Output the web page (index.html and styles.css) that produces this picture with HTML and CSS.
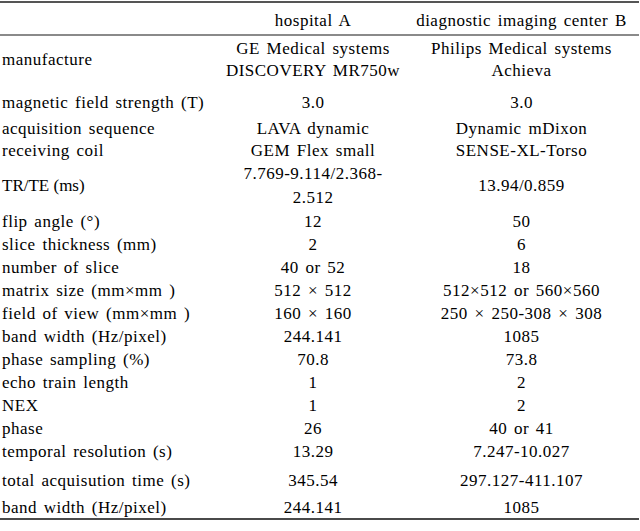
FILE: index.html
```html
<!DOCTYPE html>
<html>
<head>
<meta charset="utf-8">
<link rel="stylesheet" href="styles.css">
</head>
<body>
<table class="spec">
  <colgroup>
    <col class="c-label">
    <col class="c-a">
    <col class="c-b">
  </colgroup>
  <thead>
    <tr class="r-head">
      <th class="label"></th>
      <th>hospital A</th>
      <th>diagnostic imaging center B</th>
    </tr>
  </thead>
  <tbody>
    <tr class="r-manu">
      <td class="label">manufacture</td>
      <td>GE Medical systems<br>DISCOVERY MR750w</td>
      <td>Philips Medical systems<br>Achieva</td>
    </tr>
    <tr class="r-field">
      <td class="label">magnetic field strength (T)</td>
      <td>3.0</td>
      <td>3.0</td>
    </tr>
    <tr class="r-acq">
      <td class="label">acquisition sequence<br>receiving coil</td>
      <td>LAVA dynamic<br>GEM Flex small</td>
      <td>Dynamic mDixon<br>SENSE-XL-Torso</td>
    </tr>
    <tr class="r-trte">
      <td class="label tight">TR/TE (ms)</td>
      <td>7.769-9.114/2.368-<br>2.512</td>
      <td>13.94/0.859</td>
    </tr>
    <tr class="r-std">
      <td class="label">flip angle (°)</td>
      <td>12</td>
      <td>50</td>
    </tr>
    <tr class="r-std">
      <td class="label">slice thickness (mm)</td>
      <td>2</td>
      <td>6</td>
    </tr>
    <tr class="r-std">
      <td class="label">number of slice</td>
      <td>40 or 52</td>
      <td>18</td>
    </tr>
    <tr class="r-std">
      <td class="label">matrix size (mm×mm )</td>
      <td>512 × 512</td>
      <td>512×512 or 560×560</td>
    </tr>
    <tr class="r-std">
      <td class="label">field of view (mm×mm )</td>
      <td>160 × 160</td>
      <td>250 × 250-308 × 308</td>
    </tr>
    <tr class="r-std">
      <td class="label">band width (Hz/pixel)</td>
      <td>244.141</td>
      <td>1085</td>
    </tr>
    <tr class="r-std">
      <td class="label">phase sampling (%)</td>
      <td>70.8</td>
      <td>73.8</td>
    </tr>
    <tr class="r-std">
      <td class="label">echo train length</td>
      <td>1</td>
      <td>2</td>
    </tr>
    <tr class="r-std">
      <td class="label">NEX</td>
      <td>1</td>
      <td>2</td>
    </tr>
    <tr class="r-std">
      <td class="label">phase</td>
      <td>26</td>
      <td>40 or 41</td>
    </tr>
    <tr class="r-std">
      <td class="label">temporal resolution (s)</td>
      <td>13.29</td>
      <td>7.247-10.027</td>
    </tr>
    <tr class="r-total">
      <td class="label">total acquisution time (s)</td>
      <td>345.54</td>
      <td>297.127-411.107</td>
    </tr>
    <tr class="r-last">
      <td class="label">band width (Hz/pixel)</td>
      <td>244.141</td>
      <td>1085</td>
    </tr>
  </tbody>
</table>
</body>
</html>
```

FILE: styles.css
```css
html, body {
  margin: 0;
  padding: 0;
  background: #ffffff;
}

.spec {
  margin-top: 1px;
  width: 639px;
  border-collapse: collapse;
  table-layout: fixed;
  font-family: "Liberation Serif", "Times New Roman", serif;
  font-size: 17px;
  letter-spacing: 0.5px;
  word-spacing: 2px;
  color: #000000;
  border-top: 2px solid #555555;
  border-bottom: 2px solid #4a4a4a;
}

.c-label { width: 222px; }
.c-a { width: 182px; }
.c-b { width: 235px; }

.spec th,
.spec td {
  padding: 0;
  text-align: center;
  vertical-align: middle;
  font-weight: normal;
  white-space: nowrap;
  line-height: 23px;
}

.spec .label {
  text-align: left;
  padding-left: 2px;
}

.spec .tight {
  letter-spacing: 0;
  word-spacing: 0;
}

.r-head th {
  padding-top: 6px;
  padding-bottom: 2px;
  border-bottom: 2px solid #8a8a8a;
}

.r-manu td {
  line-height: 22px;
  padding-top: 2px;
  padding-bottom: 4px;
}

.r-field td {
  padding-top: 5px;
  padding-bottom: 2px;
}

.r-acq td {
  line-height: 22px;
  padding-top: 2px;
}

.r-trte td {
  line-height: 24px;
}

.r-std td {
  height: 23px;
}

.r-total td {
  padding-top: 6px;
}

.r-last td {
  line-height: 20px;
  padding-top: 6px;
}
```
